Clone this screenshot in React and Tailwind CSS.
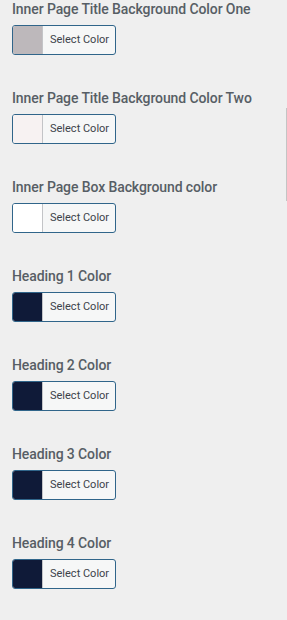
const fields = [
  { label: 'Inner Page Title Background Color One', color: '#bdb8bb' },
  { label: 'Inner Page Title Background Color Two', color: '#f7f2f2' },
  { label: 'Inner Page Box Background color', color: '#ffffff' },
  { label: 'Heading 1 Color', color: '#0f1a38' },
  { label: 'Heading 2 Color', color: '#0f1a38' },
  { label: 'Heading 3 Color', color: '#0f1a38' },
  { label: 'Heading 4 Color', color: '#0f1a38' },
];

function ColorField({ label, color }) {
  return (
    <div className="flex flex-col pb-[33px]">
      <span className="text-[14px] leading-[20px] font-medium text-[#575e65] whitespace-nowrap tracking-[-0.1px]">{label}</span>
      <button className="mt-[6px] flex h-[30px] w-[104px] overflow-hidden rounded-[3px] border border-[#30658a] bg-[#f6f7f7] p-0 text-left">
        <span className="h-full w-[30px] border-r border-[#c3c4c7]" style={{ backgroundColor: color }} />
        <span className="flex-1 pl-[7px] text-[11px] leading-[28px] text-[#3c434a]">Select Color</span>
      </button>
    </div>
  );
}

export default function App() {
  return (
    <div className="relative h-[620px] w-[287px] overflow-hidden bg-[#efefef] pl-[12px]" style={{ fontFamily: 'Roboto, "Liberation Sans", sans-serif' }}>
      <div className="-mt-[1px] flex flex-col">
        {fields.map((f) => (
          <ColorField key={f.label} {...f} />
        ))}
      </div>
      <div className="absolute right-0 top-[108px] h-[93px] w-[1px] bg-[#c4c4c4]" />
    </div>
  );
}
